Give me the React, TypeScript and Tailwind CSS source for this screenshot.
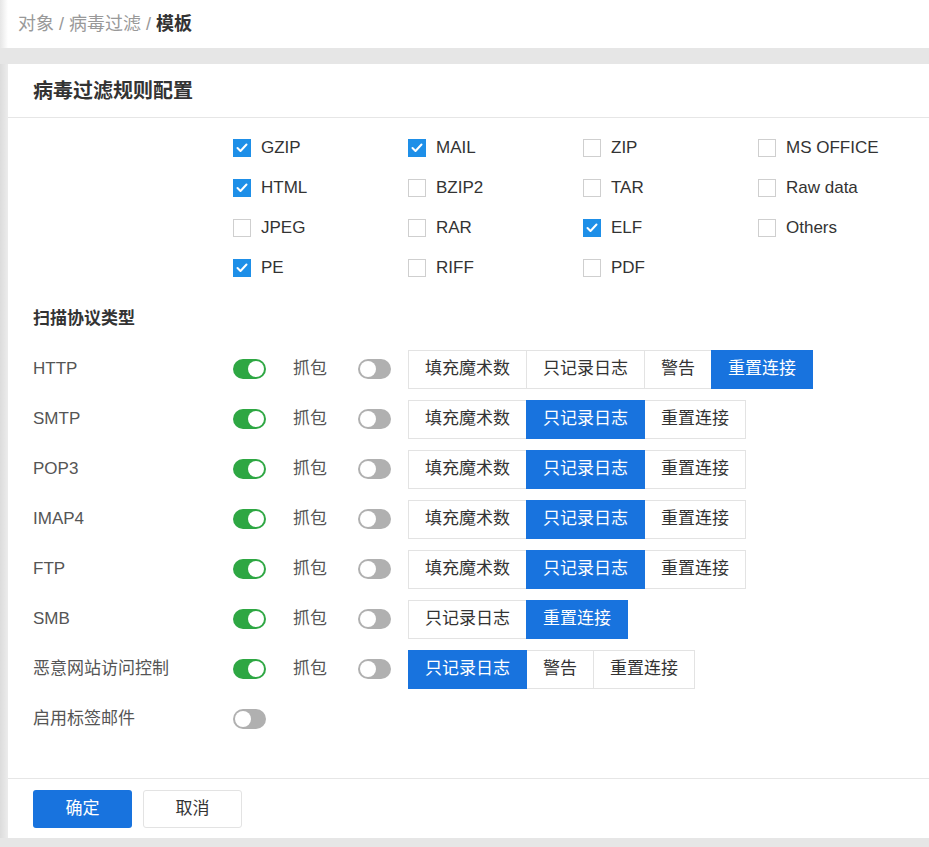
import { useState } from 'react';

const FONT = { fontFamily: '"Liberation Sans", "Noto Sans CJK SC", sans-serif' };

const FILE_TYPES: { name: string; checked: boolean }[] = [
  { name: 'GZIP', checked: true },
  { name: 'MAIL', checked: true },
  { name: 'ZIP', checked: false },
  { name: 'MS OFFICE', checked: false },
  { name: 'HTML', checked: true },
  { name: 'BZIP2', checked: false },
  { name: 'TAR', checked: false },
  { name: 'Raw data', checked: false },
  { name: 'JPEG', checked: false },
  { name: 'RAR', checked: false },
  { name: 'ELF', checked: true },
  { name: 'Others', checked: false },
  { name: 'PE', checked: true },
  { name: 'RIFF', checked: false },
  { name: 'PDF', checked: false },
];

interface Protocol {
  name: string;
  enabled: boolean;
  capture?: boolean;
  actions?: string[];
  active?: string;
}

const PROTOCOLS: Protocol[] = [
  { name: 'HTTP', enabled: true, capture: false, actions: ['填充魔术数', '只记录日志', '警告', '重置连接'], active: '重置连接' },
  { name: 'SMTP', enabled: true, capture: false, actions: ['填充魔术数', '只记录日志', '重置连接'], active: '只记录日志' },
  { name: 'POP3', enabled: true, capture: false, actions: ['填充魔术数', '只记录日志', '重置连接'], active: '只记录日志' },
  { name: 'IMAP4', enabled: true, capture: false, actions: ['填充魔术数', '只记录日志', '重置连接'], active: '只记录日志' },
  { name: 'FTP', enabled: true, capture: false, actions: ['填充魔术数', '只记录日志', '重置连接'], active: '只记录日志' },
  { name: 'SMB', enabled: true, capture: false, actions: ['只记录日志', '重置连接'], active: '重置连接' },
  { name: '恶意网站访问控制', enabled: true, capture: false, actions: ['只记录日志', '警告', '重置连接'], active: '只记录日志' },
  { name: '启用标签邮件', enabled: false },
];

const Checkbox: React.FC<{ label: string; checked: boolean; onToggle: () => void }> = ({ label, checked, onToggle }) => (
  <label className="flex items-center h-10 cursor-pointer select-none" onClick={onToggle}>
    {checked ? (
      <span className="w-[18px] h-[18px] bg-[#1e8fe8] flex items-center justify-center">
        <svg width="12" height="10" viewBox="0 0 12 10" fill="none">
          <path d="M1.5 5l3 3 6-6.5" stroke="#fff" strokeWidth="2" strokeLinecap="round" strokeLinejoin="round" />
        </svg>
      </span>
    ) : (
      <span className="w-[18px] h-[18px] border border-[#cfcfcf] bg-white" />
    )}
    <span className="ml-[10px] text-[17px] text-[#333]">{label}</span>
  </label>
);

const Toggle: React.FC<{ on: boolean; onToggle: () => void }> = ({ on, onToggle }) => (
  <button
    type="button"
    onClick={onToggle}
    className={`w-[33px] h-[20px] rounded-full flex items-center px-[2px] ${on ? 'bg-[#2ea743] justify-end' : 'bg-[#b0b0b0] justify-start'}`}
  >
    <span className="w-[16px] h-[16px] rounded-full bg-white" />
  </button>
);

const ButtonGroup: React.FC<{ actions: string[]; active: string; onPick: (a: string) => void }> = ({ actions, active, onPick }) => (
  <div className="flex h-[39px]">
    {actions.map((a, i) => (
      <button
        key={a}
        type="button"
        onClick={() => onPick(a)}
        className={`px-[16px] text-[17px] border ${i > 0 ? '-ml-px' : ''} ${
          a === active ? 'bg-[#1873de] border-[#1873de] text-white relative' : 'bg-white border-[#e3e3e3] text-[#333]'
        }`}
      >
        {a}
      </button>
    ))}
  </div>
);

export default function App() {
  const [files, setFiles] = useState(FILE_TYPES);
  const [protocols, setProtocols] = useState(PROTOCOLS);

  const update = (idx: number, patch: Partial<Protocol>) =>
    setProtocols((ps) => ps.map((p, i) => (i === idx ? { ...p, ...patch } : p)));

  return (
    <div className="min-h-[847px] bg-[#e6e6e6] flex flex-col" style={FONT}>
      <div className="h-[48px] flex">
        <div className="w-[8px] shrink-0 bg-linear-to-r from-[#e6e6e6] to-white" />
        <div className="flex-1 bg-white flex items-center pl-[10px]">
          <span className="text-[18px] text-[#999]">对象 / 病毒过滤 / </span>
          <span className="text-[18px] font-bold text-[#333] ml-[5px]">模板</span>
        </div>
      </div>

      <div className="flex-1 flex pt-[16px] pb-[9px]">
        <div className="w-[8px] shrink-0 bg-linear-to-r from-[#dcdcdc] to-[#ececec]" />
        <div className="flex-1 min-w-0 bg-white flex flex-col">
          <div className="h-[54px] flex items-center px-[25px] border-b border-[#e6e6e6]">
            <span className="text-[20px] font-bold text-[#333]">病毒过滤规则配置</span>
          </div>

          <div className="flex-1 px-[25px] pt-[10px]">
            <div className="pl-[200px] grid grid-cols-[175px_175px_175px_175px]">
              {files.map((f, i) => (
                <Checkbox
                  key={f.name}
                  label={f.name}
                  checked={f.checked}
                  onToggle={() => setFiles((fs) => fs.map((x, j) => (j === i ? { ...x, checked: !x.checked } : x)))}
                />
              ))}
            </div>

            <div className="h-[50px] flex items-center mt-[6px]">
              <span className="text-[17px] font-bold text-[#333]">扫描协议类型</span>
            </div>

            <div className="flex flex-col">
              {protocols.map((p, idx) => (
                <div key={p.name} className="h-[50px] flex items-center">
                  <span className="w-[200px] text-[17px] text-[#555]">{p.name}</span>
                  <Toggle on={p.enabled} onToggle={() => update(idx, { enabled: !p.enabled })} />
                  {p.actions && (
                    <>
                      <span className="ml-[27px] w-[65px] text-[17px] text-[#555]">抓包</span>
                      <Toggle on={!!p.capture} onToggle={() => update(idx, { capture: !p.capture })} />
                      <div className="ml-[17px]">
                        <ButtonGroup actions={p.actions} active={p.active!} onPick={(a) => update(idx, { active: a })} />
                      </div>
                    </>
                  )}
                </div>
              ))}
            </div>
          </div>

          <div className="h-[60px] border-t border-[#e6e6e6] flex items-center px-[25px] gap-[11px]">
            <button type="button" className="w-[99px] h-[38px] rounded-[3px] bg-[#1873de] text-white text-[17px]">
              确定
            </button>
            <button type="button" className="w-[99px] h-[38px] rounded-[3px] border border-[#e3e3e3] bg-white text-[#333] text-[17px]">
              取消
            </button>
          </div>
        </div>
      </div>
    </div>
  );
}
